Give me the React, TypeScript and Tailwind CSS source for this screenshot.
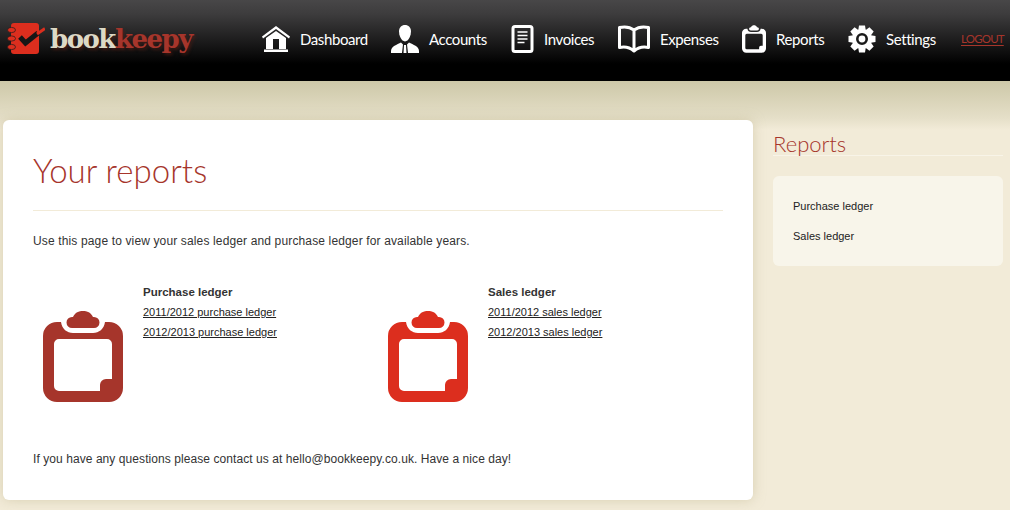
const CLIP =
  "M14 11H18C19 18 24 22 30 22H50C56 22 61 18 62 11H66A14 14 0 0 1 80 25V77A14 14 0 0 1 66 91H14A14 14 0 0 1 0 77V25A14 14 0 0 1 14 11ZM16 28A5 5 0 0 0 11 33V75A5 5 0 0 0 16 80H57V74A6 6 0 0 1 63 68H69V33A5 5 0 0 0 64 28ZM29 17A5.500 5.500 0 0 1 29 6H30C32 1.500 36 0 40 0C44 0 48 1.500 50 6H51A5.500 5.500 0 0 1 51 17Z";

function Clipboard({ className }: { className: string }) {
  return (
    <svg viewBox="0 0 80 91" className={className} fill="currentColor">
      <path fillRule="evenodd" d={CLIP} />
    </svg>
  );
}

function HomeIcon() {
  return (
    <svg viewBox="0 0 28 26" className="w-[28px] h-[26px] text-white" fill="currentColor">
      <path d="M14 0L28 10.500L27 12.500L14 3L1 12.500L0 10.500Z" />
      <path fillRule="evenodd" d="M14 5L24 12V23H4V12ZM11 13V23H17V13Z" />
      <rect x="2" y="23.500" width="24" height="2.500" />
    </svg>
  );
}

function UserIcon() {
  return (
    <svg viewBox="0 0 28 28" className="w-[28px] h-[28px] text-white" fill="currentColor">
      <path d="M14 0C17.500 0 20 2.500 20 6.500C20 10.500 18 14 16.500 15.500L14 16.500L11.500 15.500C10 14 8 10.500 8 6.500C8 2.500 10.500 0 14 0Z" />
      <path d="M10 17.500L12 19.500L11 28H0V26C0 21.500 6 19.500 10 17.500Z" />
      <path d="M18 17.500L16 19.500L17 28H28V26C28 21.500 22 19.500 18 17.500Z" />
      <path d="M13 20H15L15.500 28H12.500Z" />
    </svg>
  );
}

function DocIcon() {
  return (
    <svg viewBox="0 0 22 28" className="w-[23px] h-[28px] text-white">
      <rect x="1.500" y="1.500" width="19" height="25" rx="2" fill="none" stroke="currentColor" strokeWidth="3" />
      <path d="M6 7H16M6 10.500H16M6 14H16M6 17.500H13" stroke="currentColor" strokeWidth="1.600" />
    </svg>
  );
}

function BookIcon() {
  return (
    <svg viewBox="0 0 32 28" className="w-[32px] h-[28px] text-white" fill="none" stroke="currentColor" strokeWidth="3" strokeLinejoin="round">
      <path d="M16 5C12 2 6 1.500 1.500 2.500V22.500C6 21.500 12 22.500 16 26C20 22.500 26 21.500 30.500 22.500V2.500C26 1.500 20 2 16 5V25" />
    </svg>
  );
}

function GearIcon() {
  const teeth = [0, 45, 90, 135, 180, 225, 270, 315];
  return (
    <svg viewBox="0 0 28 28" className="w-[28px] h-[28px] text-white">
      {teeth.map((a) => (
        <path key={a} d="M11 0.500H17L18 7H10Z" fill="currentColor" transform={`rotate(${a} 14 14)`} />
      ))}
      <circle cx="14" cy="14" r="10" fill="currentColor" />
      <circle cx="14" cy="14" r="4.700" fill="none" stroke="#1a1a1a" strokeWidth="2.600" />
    </svg>
  );
}

function LogoMark() {
  return (
    <svg viewBox="0 0 38 32" className="w-[38px] h-[32px] shrink-0">
      <rect x="4" y="0" width="28" height="31" rx="3" fill="#dc2e1e" />
      <g fill="#dc2e1e" stroke="#1c1c1c" strokeWidth="0.700">
        <ellipse cx="4.500" cy="7" rx="4" ry="2.600" />
        <ellipse cx="4.500" cy="15.500" rx="4" ry="2.600" />
        <ellipse cx="4.500" cy="24" rx="4" ry="2.600" />
      </g>
      <path d="M13 14L18.500 20L31 10" fill="none" stroke="#161616" strokeWidth="5" />
      <path d="M30 11L38 5.500" fill="none" stroke="#dc2e1e" strokeWidth="3" />
    </svg>
  );
}

const NAV = [
  { label: "Dashboard", width: "w-[68px]", icon: <HomeIcon /> },
  { label: "Accounts", width: "w-[59px]", icon: <UserIcon /> },
  { label: "Invoices", width: "w-[51px]", icon: <DocIcon /> },
  { label: "Expenses", width: "w-[59px]", icon: <BookIcon /> },
  { label: "Reports", width: "w-[49px]", icon: <Clipboard className="w-[24px] h-[28px] text-white" /> },
  { label: "Settings", width: "w-[51px]", icon: <GearIcon /> },
];

function Ledger({ title, links, color }: { title: string; links: string[]; color: string }) {
  return (
    <div className="flex">
      <div className="w-[110px] pl-[10px] pt-[29px] shrink-0">
        <Clipboard className={`block w-[80px] h-[91px] ${color}`} />
      </div>
      <div className="text-[11px] leading-[20px] text-[#222]">
        <div className="font-bold text-[11.5px] text-[#333]">{title}</div>
        {links.map((l) => (
          <div key={l}>
            <a href="#" className="underline">{l}</a>
          </div>
        ))}
      </div>
    </div>
  );
}

export default function App() {
  return (
    <div className="w-[1010px] h-[510px] overflow-hidden font-['Liberation_Sans',sans-serif] bg-[linear-gradient(#cdc8a8_81px,#e5dfc8_118px,#f2ebd8_130px)]">
      <header className="h-[81px] bg-[linear-gradient(#484748_0,#3d3c3d_14px,#000_64px)] flex items-center">
        <div className="flex items-center w-[262px] pl-[7px] pb-[3px] shrink-0">
          <LogoMark />
          <div className="ml-[5px] text-[26px] font-bold leading-none font-['DejaVu_Serif',serif] tracking-[-1.500px] [text-shadow:2px_2px_3px_rgba(90,30,20,0.6)]">
            <span className="text-[#ddd9c6]">book</span>
            <span className="text-[#a6352b]">keepy</span>
          </div>
        </div>
        <nav className="flex items-center gap-[23px] pb-[3px]">
          {NAV.map((n) => (
            <a key={n.label} href="#" className="flex items-center gap-[10px] text-white text-[15px] tracking-[-0.400px] font-['Lato',sans-serif]">
              {n.icon}
              <span className={`${n.width} whitespace-nowrap`}>{n.label}</span>
            </a>
          ))}
          <a href="#" className="text-[#a6352b] underline underline-offset-2 text-[11.5px] tracking-[-0.800px] font-['Lato',sans-serif] ml-px">LOGOUT</a>
        </nav>
      </header>
      <div className="flex pl-[3px] pt-[39px]">
        <main className="w-[750px] h-[380px] bg-white rounded-[6px] shadow-[0_0_12px_rgba(190,180,140,0.5)] px-[30px] shrink-0">
          <h1 className="h-[91px] pt-[26px] border-b border-[#f2ebd8] text-[#a6352b] text-[33px] leading-[48px] font-light font-['Lato',sans-serif]">
            Your reports
          </h1>
          <p className="mt-[22px] text-[12px] leading-[16px] tracking-[0.140px] text-[#333]">
            Use this page to view your sales ledger and purchase ledger for available years.
          </p>
          <div className="mt-[33px] grid grid-cols-[345px_345px]">
            <Ledger
              title="Purchase ledger"
              color="text-[#a6352b]"
              links={["2011/2012 purchase ledger", "2012/2013 purchase ledger"]}
            />
            <Ledger
              title="Sales ledger"
              color="text-[#dc2e1e]"
              links={["2011/2012 sales ledger", "2012/2013 sales ledger"]}
            />
          </div>
          <p className="mt-[49px] text-[12px] leading-[16px] tracking-[0.070px] text-[#333]">
            If you have any questions please contact us at hello@bookkeepy.co.uk. Have a nice day!
          </p>
        </main>
        <aside className="ml-[20px] w-[230px] shrink-0">
          <h2 className="h-[36px] pt-[9px] border-b border-[#f8f4e8] text-[#a6352b] text-[22px] leading-[30px] font-light font-['Lato',sans-serif]">
            Reports
          </h2>
          <div className="mt-[20px] h-[90px] rounded-[6px] bg-[#f8f5ea] px-[20px] py-[15px] text-[11px] leading-[30px] text-[#222]">
            <div>Purchase ledger</div>
            <div>Sales ledger</div>
          </div>
        </aside>
      </div>
    </div>
  );
}
